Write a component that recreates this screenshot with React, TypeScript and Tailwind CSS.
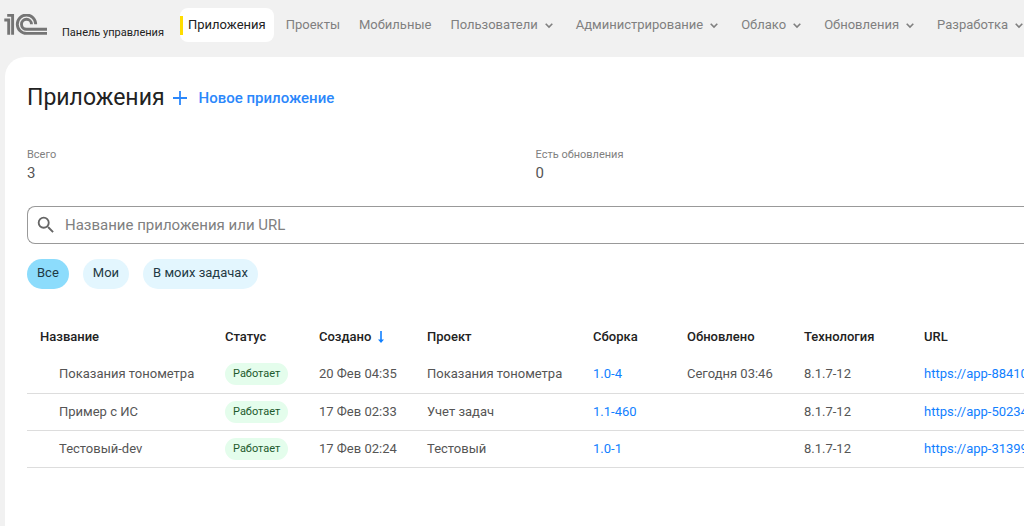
import React, { useState } from "react";
import { MdSearch } from "react-icons/md";

interface AppRow {
  name: string;
  status: string;
  created: string;
  project: string;
  build: string;
  updated: string;
  tech: string;
  url: string;
}

const menuItems = ["Пользователи", "Администрирование", "Облако", "Обновления", "Разработка"];

const rows: AppRow[] = [
  { name: "Показания тонометра", status: "Работает", created: "20 Фев 04:35", project: "Показания тонометра", build: "1.0-4", updated: "Сегодня 03:46", tech: "8.1.7-12", url: "https://app-88410" },
  { name: "Пример с ИС", status: "Работает", created: "17 Фев 02:33", project: "Учет задач", build: "1.1-460", updated: "", tech: "8.1.7-12", url: "https://app-50234" },
  { name: "Тестовый-dev", status: "Работает", created: "17 Фев 02:24", project: "Тестовый", build: "1.0-1", updated: "", tech: "8.1.7-12", url: "https://app-31399" },
];

const filters = ["Все", "Мои", "В моих задачах"];

const Logo = () => (
  <svg className="w-[43px] h-[22px] shrink-0" viewBox="0 0 43 22" fill="none" stroke="#757575" strokeWidth="2.9">
    <path d="M0.3 6H4.7V20.7" />
    <path d="M3.2 1.4H8.6V20.7" />
    <path d="M31.7 10.2A9.2 9.2 0 1 0 22.5 19.4H43" />
    <path d="M27.5 10.2A5 5 0 1 0 22.5 15.3H43" />
  </svg>
);

const Chevron = () => (
  <svg className="w-2 h-2 shrink-0" viewBox="0 0 8 8" fill="none" stroke="currentColor" strokeWidth="1.6">
    <path d="M0.7 2.7L4 6L7.3 2.7" />
  </svg>
);

const SortArrow = () => (
  <svg className="w-1.5 h-3 shrink-0" viewBox="0 0 6 12" fill="#1180ff">
    <path d="M2.2 0H3.8V8.6H6L3 12L0 8.6H2.2Z" />
  </svg>
);

const Header = () => (
  <header className="flex h-[57px] overflow-hidden pl-1 whitespace-nowrap">
    <div className="flex shrink-0 items-start gap-[15px] pt-[14px]">
      <Logo />
      <span className="pt-[11px] text-[11px] leading-4 text-[#222]">Панель управления</span>
    </div>
    <nav className="ml-4 mt-2 flex h-[34px] shrink-0 items-center text-[13px] text-[#808080]">
      <a href="#apps" className="flex h-full items-center rounded-lg bg-white pr-2 text-[#222]">
        <span className="mr-[5px] h-[19px] w-[3px] bg-[#ffdd00]" />
        Приложения
      </a>
      <a href="#projects" className="ml-3">Проекты</a>
      <a href="#mobile" className="mx-[19px]">Мобильные</a>
      <div className="flex gap-[23px]">
        {menuItems.map((title) => (
          <button key={title} type="button" className="flex items-center gap-[7px]">
            {title}
            <Chevron />
          </button>
        ))}
      </div>
    </nav>
  </header>
);

const Stat = ({ label, value }: { label: string; value: number }) => (
  <div>
    <p className="text-[11px] leading-4 text-[#808080]">{label}</p>
    <p className="text-[15px] leading-5 text-[#555]">{value}</p>
  </div>
);

const App = () => {
  const [filter, setFilter] = useState("Все");
  const [query, setQuery] = useState("");

  const visible = rows.filter((r) => (r.name + r.url).toLowerCase().includes(query.toLowerCase()));

  return (
    <div className="flex min-h-screen flex-col bg-[#f1f1f1] font-['Roboto',sans-serif]">
      <Header />

      <main className="ml-[5px] flex-1 overflow-hidden rounded-tl-[20px] bg-white pl-[22px]">
        <div className="flex items-center gap-2 pt-[25px]">
          <h1 className="text-[23px] leading-8 text-[#222]">Приложения</h1>
          <button type="button" className="flex items-center gap-3 text-[15px] font-medium text-[#2b87fb]">
            <svg className="w-[14px] h-[14px]" viewBox="0 0 14 14" stroke="currentColor" strokeWidth="1.8">
              <path d="M7 0V14M0 7H14" />
            </svg>
            Новое приложение
          </button>
        </div>

        <div className="mt-[33px] grid grid-cols-2 gap-5">
          <Stat label="Всего" value={3} />
          <Stat label="Есть обновления" value={0} />
        </div>

        {/* Search */}
        <label className="mt-[23px] flex h-[38px] items-center gap-2 rounded-l-lg border border-r-0 border-[#999] pl-[7px]">
          <MdSearch className="size-[22px] shrink-0 text-[#666]" />
          <input
            type="text"
            value={query}
            onChange={(e) => setQuery(e.target.value)}
            placeholder="Название приложения или URL"
            aria-label="Название приложения или URL"
            className="min-w-0 flex-1 bg-transparent text-[15px] text-[#333] outline-none placeholder:text-[#808080]"
          />
        </label>

        {/* Filters */}
        <div className="mt-[15px] flex gap-[14px]">
          {filters.map((f) => (
            <button
              key={f}
              type="button"
              onClick={() => setFilter(f)}
              className={`h-[30px] rounded-full px-[10px] pb-0.5 text-[13px] text-[#1f3a44] ${filter === f ? "bg-[#8cdcfc]" : "bg-[#e3f6fe]"}`}
            >
              {f}
            </button>
          ))}
        </div>

        {/* Apps table */}
        <table className="mt-[30px] w-full table-fixed text-left text-[13px] leading-5 whitespace-nowrap text-[#555]">
          <thead>
            <tr className="h-[37px] text-[#222] [&>th]:pb-0.5 [&>th]:font-medium">
              <th className="w-[198px] pl-[13px]">Название</th>
              <th className="w-[94px]">Статус</th>
              <th className="w-[108px]">
                <span className="flex items-center gap-[7px]">
                  Создано
                  <SortArrow />
                </span>
              </th>
              <th className="w-[166px]">Проект</th>
              <th className="w-[94px]">Сборка</th>
              <th className="w-[117px]">Обновлено</th>
              <th className="w-[120px]">Технология</th>
              <th>URL</th>
            </tr>
          </thead>
          <tbody>
            {visible.map((r) => (
              <tr key={r.name} className="h-[37px] border-b border-[#ddd]">
                <td className="pl-8">{r.name}</td>
                <td>
                  <span className="inline-flex h-[22px] items-center rounded-full bg-[#e4fdec] px-2 text-[11px] text-[#1d5a2c]">{r.status}</span>
                </td>
                <td>{r.created}</td>
                <td>{r.project}</td>
                <td><a href="#build" className="text-[#1180ff]">{r.build}</a></td>
                <td>{r.updated}</td>
                <td>{r.tech}</td>
                <td className="overflow-hidden"><a href={r.url} className="text-[#1180ff]">{r.url}</a></td>
              </tr>
            ))}
          </tbody>
        </table>
      </main>
    </div>
  );
};

export default App;
